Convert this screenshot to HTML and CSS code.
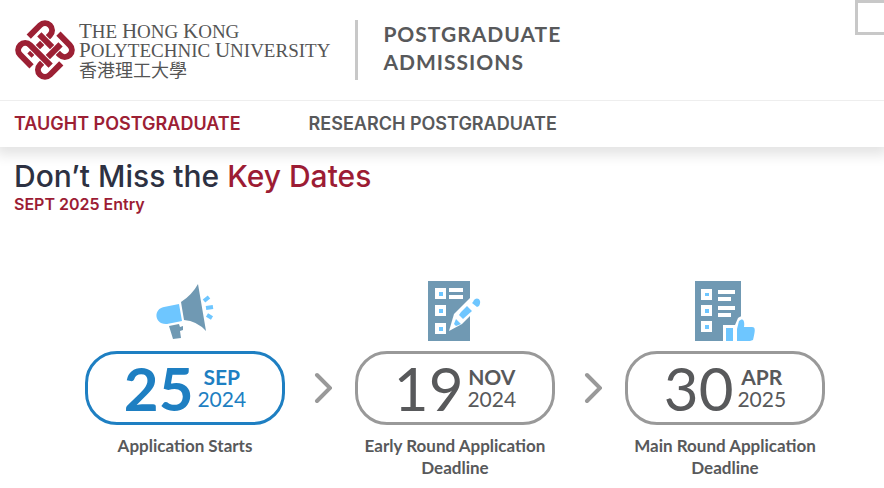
FILE: index.html
```
<!DOCTYPE html>
<html lang="en">
<head>
    <meta charset="UTF-8">
    <meta name="viewport" content="width=device-width, initial-scale=1.0">
    <title>Postgraduate Admissions</title>
    <link rel="stylesheet" href="styles.css">
</head>
<body>
    <header class="header">
        <div class="top-bar">
            <a class="logo" href="#">
                <svg class="emblem" viewBox="-30 -30 60 60" aria-hidden="true">
                    <defs>
                        <path id="band" d="M-21 2V-14a7 7 0 0 1 14 0V15"/>
                        <g id="arm" fill="none">
                            <use href="#band" stroke="#fff" stroke-width="8"/>
                            <use href="#band" stroke="#9c2034" stroke-width="6"/>
                        </g>
                    </defs>
                    <g transform="rotate(45)">
                        <use href="#arm"/>
                        <use href="#arm" transform="rotate(90)"/>
                        <use href="#arm" transform="rotate(180)"/>
                        <use href="#arm" transform="rotate(270)"/>
                    </g>
                </svg>
                <span class="logo-text">
                    <span class="logo-en"><b>T</b>HE <b>H</b>ONG <b>K</b>ONG</span>
                    <span class="logo-en"><b>P</b>OLYTECHNIC <b>U</b>NIVERSITY</span>
                    <span class="logo-zh" lang="zh-Hant">香港理工大學</span>
                </span>
            </a>
            <div class="site-name">Postgraduate<br>Admissions</div>
            <button class="menu-button" type="button" aria-label="Menu"></button>
        </div>
        <nav class="nav">
            <a class="active" href="#">Taught Postgraduate</a>
            <a href="#">Research Postgraduate</a>
        </nav>
    </header>

    <main>
        <div class="heading">
            <h1>Don’t Miss the <span>Key Dates</span></h1>
            <p>SEPT 2025 Entry</p>
        </div>

        <div class="timeline">
            <section class="step current">
                <svg class="icon" viewBox="0 0 60 60" aria-hidden="true">
                    <path fill="#6ec6ff" d="M24 23l3 17-15 3C-1 44-2 28 9 26z"/>
                    <path fill="#7099b3" d="M26 21Q37 14 43 3l8 47Q42 40 29 39zM14 45l10-2 1 3 3-1v4l-3 1 1 7-8 1z"/>
                    <path fill="none" stroke="#6ec6ff" stroke-width="4" d="M49 20l5-4M51 27l7-1M52 34l5 3"/>
                </svg>
                <div class="date">
                    <span class="day">25</span>
                    <span class="month-year"><b>SEP</b>2024</span>
                </div>
                <p>Application Starts</p>
            </section>
            <svg class="arrow" viewBox="0 0 24 32" aria-hidden="true"><path d="M9 3l13 13L9 29"/></svg>
            <section class="step">
                <svg class="icon" viewBox="0 0 60 60" aria-hidden="true">
                    <path fill="#7099b3" d="M3 0h42v60H3z"/>
                    <path fill="#fff" d="M10 7h11v11H10zM10 24h11v11H10zM10 42h11v11H10zM24 7h14v4H24zM24 14h14v4H24z"/>
                    <path fill="#6ec6ff" d="M14 11h4v4h-4zM14 28h4v4h-4zM14 46h4v4h-4z"/>
                    <path fill="#fff" d="M24 50l5-17 16-16 9 9-17 17z"/>
                    <path fill="#6ec6ff" d="M36 31l6-6 5 5-9 8-4-4zM29 43l2-5 5 5-5 2zM48 21c3-7 10-2 6 4l-2 1-5-4z"/>
                </svg>
                <div class="date">
                    <span class="day">19</span>
                    <span class="month-year"><b>NOV</b>2024</span>
                </div>
                <p>Early Round Application Deadline</p>
            </section>
            <svg class="arrow" viewBox="0 0 24 32" aria-hidden="true"><path d="M9 3l13 13L9 29"/></svg>
            <section class="step">
                <svg class="icon" viewBox="0 0 60 60" aria-hidden="true">
                    <path fill="#7099b3" d="M0 0h46v60H0z"/>
                    <path fill="#fff" d="M6 8h11v11H6zM6 24h11v11H6zM6 40h11v11H6zM23 9h17v4H23zM23 16h13v4H23zM23 25h17v4H23zM23 32h13v4H23z"/>
                    <path fill="#6ec6ff" d="M10 12h4v3h-4zM10 28h4v4h-4zM10 44h4v4h-4z"/>
                    <path fill="#fff" d="M28 44h12l3-7c4-4 8 0 7 7h10v16H28z"/>
                    <path fill="#6ec6ff" d="M31 47h7v13h-7zM42 48l2-8c4-4 6 0 5 6h8c4 0 3 4 1 13l-3 1H42z"/>
                </svg>
                <div class="date">
                    <span class="day">30</span>
                    <span class="month-year"><b>APR</b>2025</span>
                </div>
                <p>Main Round Application Deadline</p>
            </section>
        </div>
    </main>
</body>
</html>
```
FILE: styles.css
```
* {
    box-sizing: border-box;
}
body {
    margin: 0;
    background: #fff;
    color: #58595b;
    font-family: Lato, sans-serif;
}
h1, p {
    margin: 0;
}
a {
    color: inherit;
    text-decoration: none;
}
.header {
    background: #fff;
    box-shadow: 0 4px 12px 4px rgba(0, 0, 0, 0.11);
}
.top-bar {
    display: flex;
    align-items: center;
    height: 101px;
    padding-left: 15px;
    border-bottom: 1px solid #eee;
}
.logo {
    display: flex;
    align-items: center;
    gap: 4px;
}
.emblem {
    width: 60px;
    height: 60px;
}
.logo-text {
    display: flex;
    flex-direction: column;
    color: #555;
}
.logo-en {
    font-family: "Liberation Serif", serif;
    font-size: 19px;
    line-height: 19px;
    white-space: nowrap;
}
.logo-en b {
    font-size: 21px;
    font-weight: normal;
    line-height: 19px;
}
.logo-zh {
    font-family: "Noto Sans CJK TC", sans-serif;
    font-size: 18px;
    line-height: 18px;
}
.site-name {
    margin-left: 25px;
    padding: 0 0 4px 25px;
    border-left: 3px solid #c8c8c8;
    font-size: 21px;
    font-weight: bold;
    letter-spacing: 1px;
    line-height: 28px;
    text-transform: uppercase;
}
.menu-button {
    align-self: flex-start;
    width: 29px;
    height: 35px;
    margin-left: auto;
    padding: 0;
    background: #fff;
    border: 3px solid #c8c8c8;
    border-right: none;
}
.nav {
    display: flex;
    gap: 68px;
    padding: 0 14px;
    font-family: Inter, sans-serif;
    font-size: 18px;
    font-weight: 600;
    line-height: 46px;
    text-transform: uppercase;
}
.nav .active {
    color: #9c2034;
}
.heading {
    padding: 12px 14px 0;
    font-family: Inter, sans-serif;
    font-weight: 600;
}
.heading h1 {
    color: #2d3142;
    font-size: 30px;
    font-weight: 500;
    line-height: 34px;
}
.heading span,
.heading p {
    color: #9c1c34;
}
.heading p {
    font-size: 16px;
    line-height: 22px;
}
.timeline {
    display: grid;
    grid-template-columns: 1fr 70px 1fr 70px 1fr;
    padding: 66px 59px 12px 85px;
}
.step {
    display: flex;
    flex-direction: column;
    align-items: center;
    gap: 10px;
}
.icon {
    width: 60px;
    height: 60px;
}
.date {
    display: flex;
    justify-content: center;
    align-items: center;
    gap: 4px;
    width: 100%;
    height: 74px;
    border: 3px solid #999;
    border-radius: 32px;
}
.day {
    font-size: 60px;
    line-height: 60px;
}
.month-year {
    display: flex;
    flex-direction: column;
    font-size: 21px;
    line-height: 22px;
    text-align: center;
}
.step p {
    font-size: 17px;
    font-weight: bold;
    line-height: 22px;
    text-align: center;
}
.current .date {
    border-color: #1e7fc2;
    color: #1e7fc2;
}
.current .day {
    font-weight: bold;
}
.arrow {
    width: 24px;
    height: 32px;
    margin-top: 91px;
    justify-self: center;
    fill: none;
    stroke: #999;
    stroke-width: 4;
    stroke-linecap: round;
}
```
